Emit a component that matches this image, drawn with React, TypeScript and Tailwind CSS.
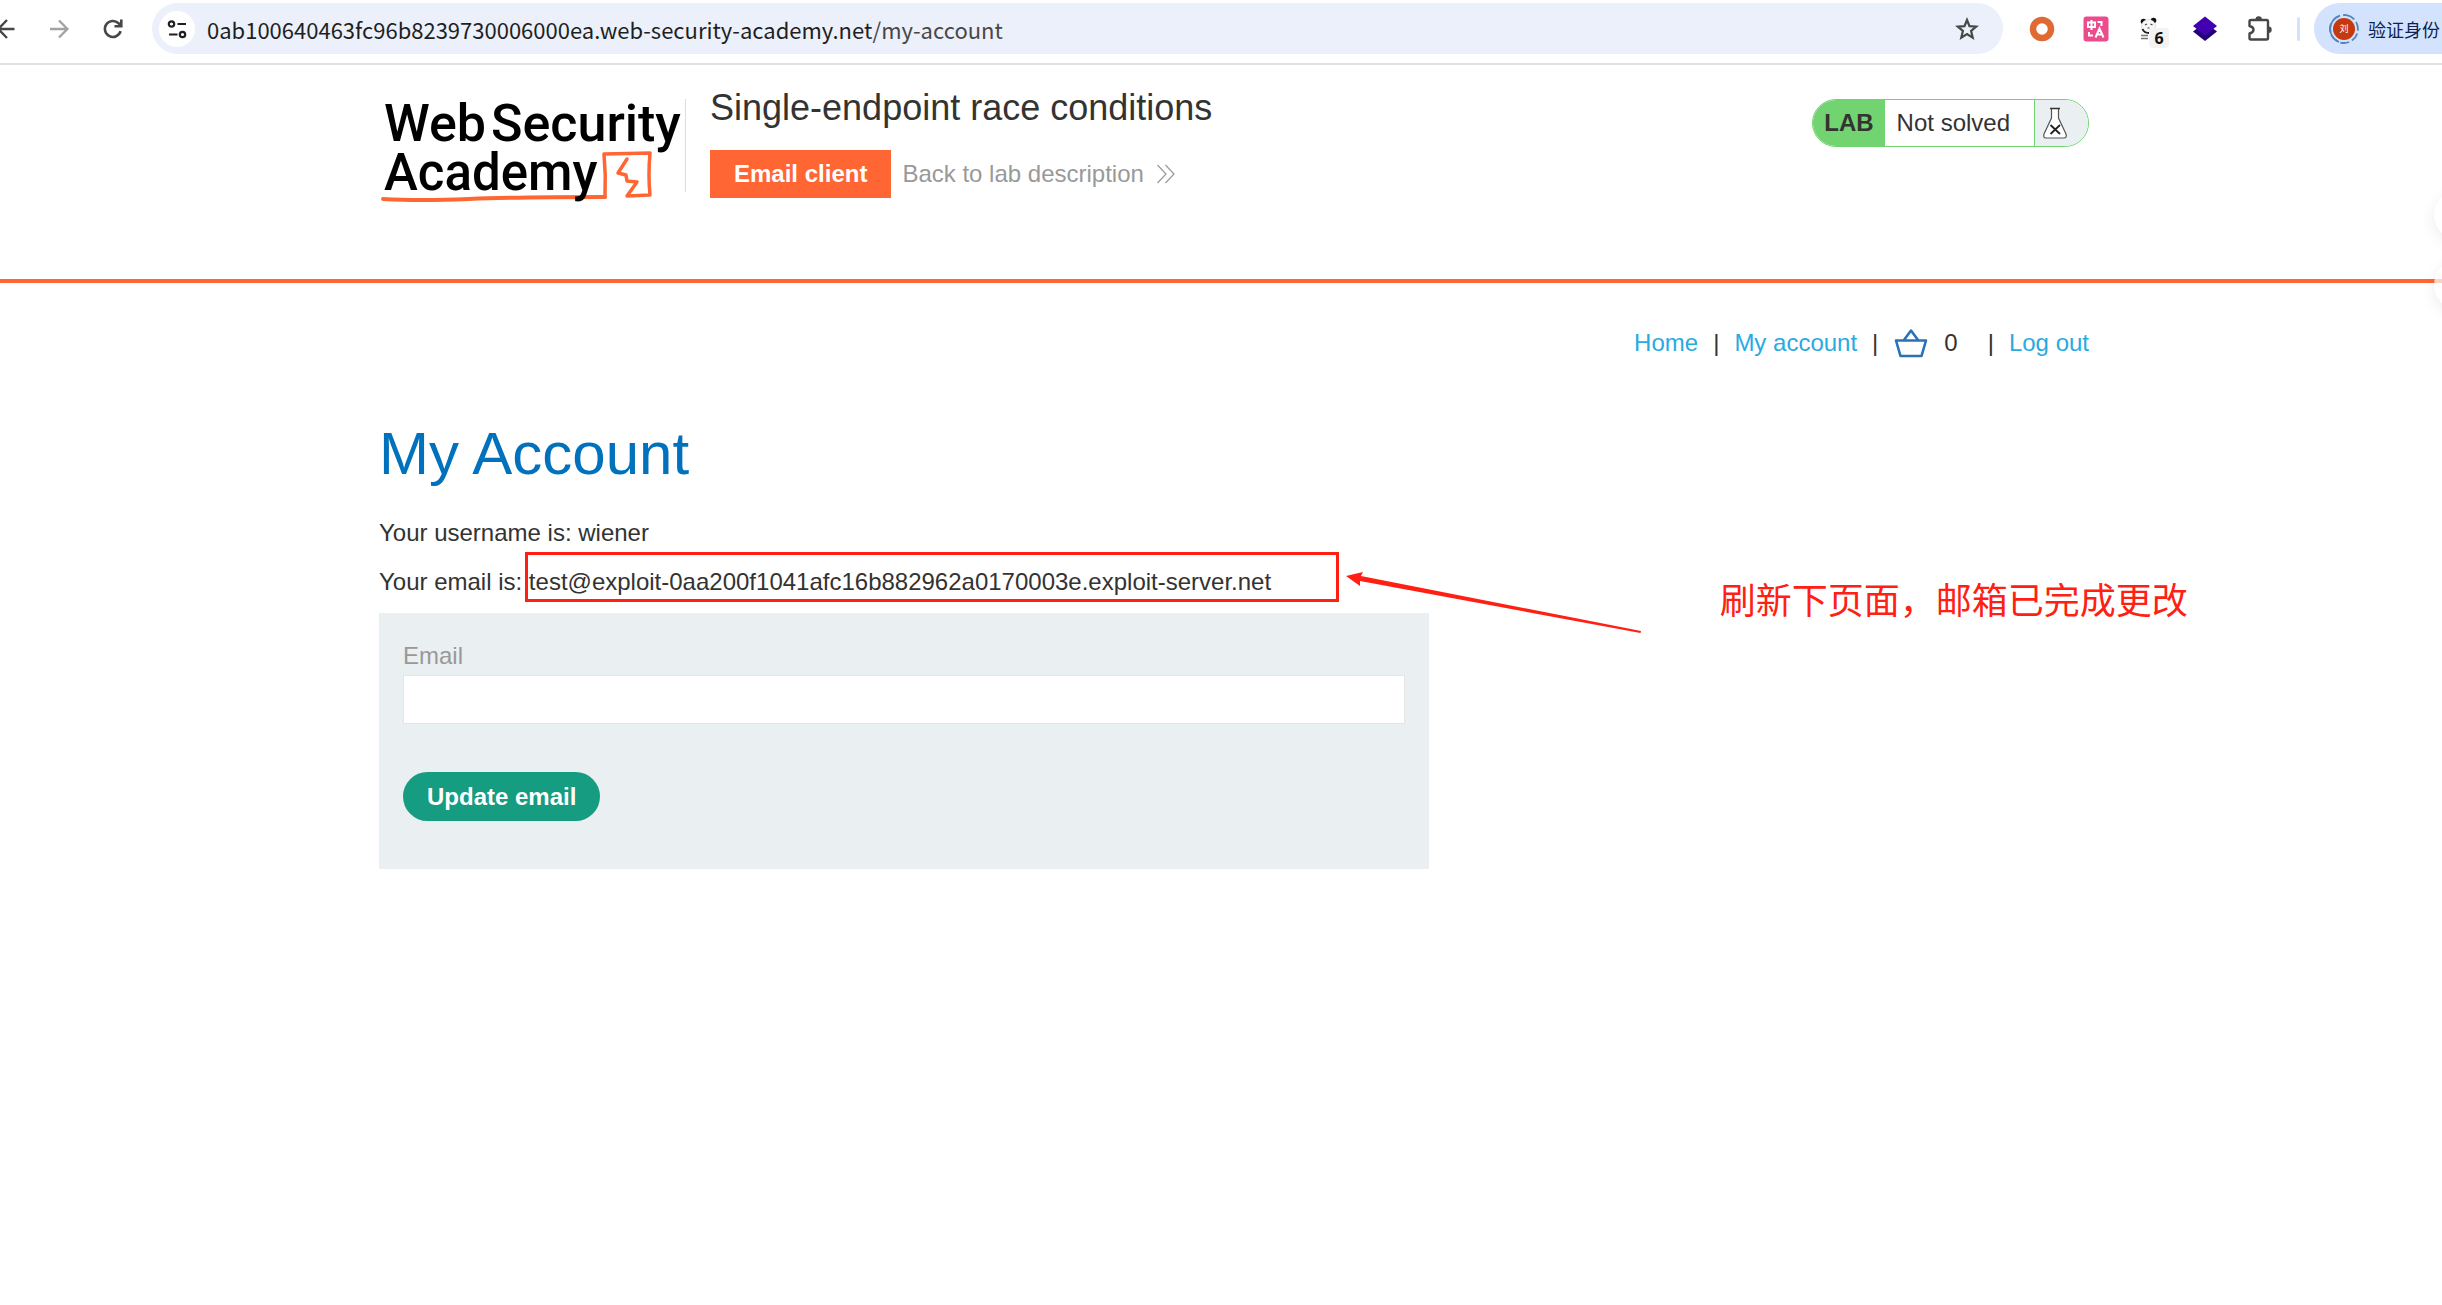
import type { ReactNode } from "react";

function IconButton({ label, className = "", children }: { label: string; className?: string; children: ReactNode }) {
  return (
    <button type="button" aria-label={label} className={`flex shrink-0 items-center justify-center ${className}`}>
      {children}
    </button>
  );
}

function BrowserBar() {
  return (
    <div className="flex h-[65px] items-start overflow-hidden border-b-2 border-[#e1e1e1] bg-white pt-[3px]">
      <div className="flex h-[51px] shrink-0 items-center">
        <IconButton label="Back" className="h-8 w-4">
          <svg className="h-[22px] w-[22px] shrink-0" viewBox="0 0 22 22" fill="none" stroke="#474747" strokeWidth="2.4">
            <path d="M17.500 11H1M10 2L1.200 11L10 20" />
          </svg>
        </IconButton>
        <IconButton label="Forward" className="ml-[32px] h-8 w-[22px]">
          <svg className="h-[22px] w-[22px]" viewBox="0 0 22 22" fill="none" stroke="#a3a3a3" strokeWidth="2.4">
            <path d="M2 11H18.500M11 2.500L19.400 11L11 19.500" />
          </svg>
        </IconButton>
        <IconButton label="Reload" className="ml-[31px] h-8 w-6">
          <svg className="h-6 w-6" viewBox="0 0 24 24" fill="none" stroke="#474747" strokeWidth="2.6">
            <path d="M19.600 14.200A8 8 0 1 1 17.500 6.200L19.500 8.400" />
            <path d="M20.300 2.500V9.300H13.500" />
          </svg>
        </IconButton>
      </div>
      <div className="ml-[27px] flex h-[51px] min-w-0 flex-1 items-center rounded-full bg-[#ebf0fa] pl-[7px] pr-[22px]">
        <IconButton label="View site information" className="h-9 w-9 rounded-full bg-white">
          <svg className="h-5 w-5" viewBox="0 0 20 20" fill="none" stroke="#1f1f1f" strokeWidth="2.200">
            <circle cx="4.500" cy="5" r="2.700" />
            <path d="M10.500 5H19M2 15.500H10.500" />
            <circle cx="15.500" cy="15.500" r="2.700" />
          </svg>
        </IconButton>
        <div className="ml-3 min-w-0 flex-1 truncate font-['Noto_Sans_CJK_SC',sans-serif] text-[22px] leading-[34px] text-[#1f1f1f]">
          0ab100640463fc96b8239730006000ea.web-security-academy.net<span className="text-[#474747]">/my-account</span>
        </div>
        <IconButton label="Bookmark this tab" className="h-8 w-[28px]">
          <svg className="h-[26px] w-[26px]" viewBox="0 0 26 26" fill="none" stroke="#474747" strokeWidth="2.200">
            <path d="M13 4L15.500 10.200L22.200 10.700L17.100 15L18.700 21.600L13 18L7.300 21.600L8.900 15L3.800 10.700L10.500 10.200Z" />
          </svg>
        </IconButton>
      </div>
      <div className="ml-[26px] flex h-[51px] shrink-0 items-center">
        <IconButton label="Proxy extension" className="h-[26px] w-[26px]">
          <svg className="h-[26px] w-[26px]" viewBox="0 0 26 26">
            <circle cx="13" cy="13" r="9" fill="none" stroke="#e06a34" strokeWidth="6.500" />
          </svg>
        </IconButton>
        <IconButton label="Translate extension" className="ml-[28px] h-[26px] w-[26px]">
          <svg className="h-[26px] w-[26px]" viewBox="0 0 26 26" fill="none" stroke="#fff" strokeWidth="2">
            <rect x="0.500" y="0.500" width="25" height="25" rx="3" fill="#ec4c8b" stroke="none" />
            <path d="M5 6.500H12V11H5ZM8.500 4V14M14.500 6H18.500V10M6 16V19.500H10M12.500 21.500L16.500 12.500L20.500 21.500M14 18.500H19" />
          </svg>
        </IconButton>
        <IconButton label="Panda extension" className="relative ml-[30px] h-[26px] w-[26px]">
          <svg className="h-[26px] w-[26px]" viewBox="0 0 26 26">
            <circle cx="4.500" cy="5.500" r="2.800" fill="#111" />
            <circle cx="14.500" cy="4.500" r="2.800" fill="#111" />
            <ellipse cx="9.500" cy="10" rx="7" ry="6.500" fill="#f7f7f7" stroke="#ccc" strokeWidth="0.600" />
            <path d="M6 9L8 8M11.500 8L13.500 9M8.500 12H10.500" stroke="#444" strokeWidth="1.200" />
            <path d="M3.500 13Q5 17 10 17" stroke="#222" strokeWidth="2" fill="none" />
            <path d="M2 19.500H9M2 22.500H9" stroke="#777" strokeWidth="1.300" />
          </svg>
          <span className="absolute left-[10px] top-3 flex h-5 w-5 items-center justify-center rounded bg-[#f3f3f3] font-['Noto_Sans'] text-base font-bold leading-5 text-[#111]">
            6
          </span>
        </IconButton>
        <IconButton label="Layers extension" className="ml-[27px] h-[26px] w-[26px]">
          <svg className="h-[26px] w-[26px]" viewBox="0 0 26 26">
            <path d="M1 15.500L5 12.500H21L25 15.500L13 25Z" fill="#24007a" />
            <path d="M13 0.500L25 10L13 19.500L1 10Z" fill="#4200b0" />
          </svg>
        </IconButton>
        <IconButton label="Extensions" className="ml-[28px] h-7 w-7">
          <svg className="h-7 w-7" viewBox="0 0 28 28">
            <path
              d="M3.500 6.500Q3.500 5 5 5H20.500Q22 5 22 6.500V23Q22 24.500 20.500 24.500H5Q3.500 24.500 3.500 23V18.500Q7.500 17.500 7.500 14.700Q7.500 12 3.500 11Z"
              fill="none"
              stroke="#474747"
              strokeWidth="2.400"
              strokeLinejoin="round"
            />
            <path d="M9.500 4.500A3.200 3.200 0 0 1 15.900 4.500ZM22.500 11.500A3.200 3.200 0 0 1 22.500 17.900Z" fill="#474747" />
          </svg>
        </IconButton>
        <div className="ml-[23px] h-6 w-[3px] rounded-full bg-[#d3e3fd]" />
        <button
          type="button"
          className="-mr-[26px] ml-[14px] flex h-[51px] items-center rounded-full bg-[#d3e3fd] pl-[14px] pr-[28px]"
        >
          <svg className="h-8 w-8" viewBox="0 0 32 32">
            <circle cx="16" cy="16" r="14" fill="none" stroke="#5681bd" strokeWidth="1.800" strokeDasharray="9 3" transform="rotate(-80 16 16)" />
            <path d="M11 29A14 14 0 0 1 11 3" fill="none" stroke="#5681bd" strokeWidth="1.800" />
            <circle cx="16" cy="16" r="11" fill="#c5390f" />
            <text x="16" y="19" textAnchor="middle" fontSize="9" fill="#fff" fontFamily="'Noto Sans CJK SC', sans-serif">
              刘
            </text>
          </svg>
          <span className="ml-2 whitespace-nowrap font-['Noto_Sans_CJK_SC',sans-serif] text-[18px] leading-7 text-[#0b2252]">验证身份</span>
        </button>
      </div>
    </div>
  );
}

function AcademyLogo() {
  return (
    <svg className="h-[115px] w-[306px] shrink-0" viewBox="0 -9 306 115" role="img" aria-label="Web Security Academy">
      <g fill="none" stroke="#ff6633" strokeLinecap="round" strokeLinejoin="round">
        <path d="M4 100Q40 102 90 100T226 98" strokeWidth="4" />
        <path d="M226 98Q227 76 225 55L271 54Q269 76 271 96L248 97L258 83L248 82L247 76L239 74L248 60" strokeWidth="3.500" />
      </g>
      <g fill="#000" fontFamily="Roboto, sans-serif" fontWeight="500" fontSize="51">
        <text x="5" y="42" fontSize="52">Web</text>
        <text x="112" y="42" fontSize="52">Security</text>
        <text x="5" y="91">Academy</text>
      </g>
    </svg>
  );
}

function LabStatus() {
  return (
    <div className="ml-auto mt-[9px] flex h-12 shrink-0 overflow-hidden rounded-full border border-[#72d470] bg-white">
      <div className="bg-[#72d470] pl-[11px] pr-[11px] font-bold leading-[46px]">LAB</div>
      <div className="pl-3 pr-6 leading-[46px]">Not solved</div>
      <div className="flex w-[54px] items-center border-l border-[#72d470] bg-[#eaeff2] pl-2">
        <svg className="h-8 w-6" viewBox="0 0 24 32" fill="none">
          <path d="M8.500 2V11L1 27Q0 31 3 31H21Q24 31 23 27L15.500 11V2" fill="#fff" stroke="#555" strokeWidth="1.200" />
          <path d="M7 1.500H17" stroke="#333" strokeWidth="1.600" />
          <path d="M7.500 18L17 27M17 18L7.500 27" stroke="#222" strokeWidth="1.800" />
        </svg>
      </div>
    </div>
  );
}

function LabHeader() {
  return (
    <header className="border-b-4 border-[#ff6633] pl-[26px]">
      <div className="mx-auto flex w-full max-w-[1710px] items-start pb-[74px] pt-[25px]">
        <a href="#academy" className="shrink-0">
          <AcademyLogo />
        </a>
        <div className="mt-[9px] h-[93px] w-px shrink-0 bg-[#dddddd]" />
        <div className="ml-6">
          <h2 className="text-[36px] leading-[36px]">Single-endpoint race conditions</h2>
          <div className="mt-6 flex items-center">
            <a href="#email-client" className="bg-[#ff6633] px-6 font-bold leading-[48px] text-white">
              Email client
            </a>
            <a href="#description" className="ml-[11px] flex items-center text-[#999999]">
              Back to lab description
              <svg className="ml-3 h-5 w-5" viewBox="0 0 20 20" fill="none" stroke="#999999" strokeWidth="1.200">
                <path d="M1.500 1L10 10L1.500 19M9.500 1L18 10L9.500 19" />
              </svg>
            </a>
          </div>
        </div>
        <LabStatus />
      </div>
    </header>
  );
}

function SiteNav() {
  return (
    <nav className="flex items-center justify-end leading-[30px]">
      <a href="#home" className="text-[#29abe2]">Home</a>
      <span className="ml-[15px]">|</span>
      <a href="#my-account" className="ml-[15px] text-[#29abe2]">My account</a>
      <span className="ml-[15px]">|</span>
      <a href="#cart" aria-label="Basket" className="ml-4">
        <svg className="h-[30px] w-[34px]" viewBox="0 0 34 30" fill="none" stroke="#2b71b8" strokeWidth="2.600" strokeLinejoin="round">
          <path d="M2 12.500H32L27.500 28H6.500ZM10 12L17 2.500L24 12" />
        </svg>
      </a>
      <span className="ml-4">0</span>
      <span className="ml-[30px]">|</span>
      <a href="#logout" className="ml-[15px] text-[#29abe2]">Log out</a>
    </nav>
  );
}

function Annotation() {
  return (
    <>
      <span className="pointer-events-none absolute -top-[15px] -left-[4px] h-[50px] w-[814px] border-[3px] border-[#ff2013]" />
      <svg className="pointer-events-none absolute left-[816px] top-0 h-[70px] w-[300px]" viewBox="0 0 300 70" fill="#ff2013">
        <path d="M1 9L18 5L16 9L296 64L295.500 66L15 14L15 19Z" />
      </svg>
      <span className="absolute left-[1191px] top-[4px] whitespace-nowrap font-['Noto_Sans_CJK_SC',sans-serif] text-[36px] leading-[54px] text-[#ff2013]">
        刷新下页面，邮箱已完成更改
      </span>
    </>
  );
}

function AccountPage() {
  return (
    <main className="pl-[26px]">
      <div className="mx-auto w-full max-w-[1710px] pt-[45px]">
        <SiteNav />
        <h1 className="mt-[60px] text-[60px] leading-[72px] text-[#0071bc]">My Account</h1>
        <p className="mt-[28px] leading-[30px]">Your username is: wiener</p>
        <p className="mt-[19px] leading-[30px]">
          Your email is:{" "}
          <span className="relative inline-block">
            test@exploit-0aa200f1041afc16b882962a0170003e.exploit-server.net
            <Annotation />
          </span>
        </p>
        <form className="mt-4 w-full max-w-[1050px] bg-[#eaeff2] px-6 pb-12 pt-7" onSubmit={(e) => e.preventDefault()}>
          <label htmlFor="email" className="block leading-[30px] text-[#999999]">
            Email
          </label>
          <input
            id="email"
            type="email"
            className="mt-1 block h-[49px] w-full border border-[#e4e4e4] bg-white px-3 outline-none"
          />
          <button type="submit" className="mt-12 block rounded-full bg-[#169c80] px-6 font-bold leading-[49px] text-white">
            Update email
          </button>
        </form>
      </div>
    </main>
  );
}

function FloatingButtons() {
  return (
    <div className="absolute -right-10 top-[191px] flex flex-col gap-[22px]">
      <button type="button" aria-label="Side tool" className="h-12 w-12 rounded-full bg-white shadow-[0_4px_16px_rgba(0,0,0,0.08)]" />
      <button type="button" aria-label="Side panel" className="h-12 w-12 rounded-full bg-white/70 shadow-[0_4px_16px_rgba(0,0,0,0.08)]" />
    </div>
  );
}

export default function App() {
  return (
    <div className="relative min-h-screen overflow-hidden bg-white font-['Liberation_Sans',Arial,sans-serif] text-[24px] text-[#333332]">
      <BrowserBar />
      <LabHeader />
      <AccountPage />
      <FloatingButtons />
    </div>
  );
}
